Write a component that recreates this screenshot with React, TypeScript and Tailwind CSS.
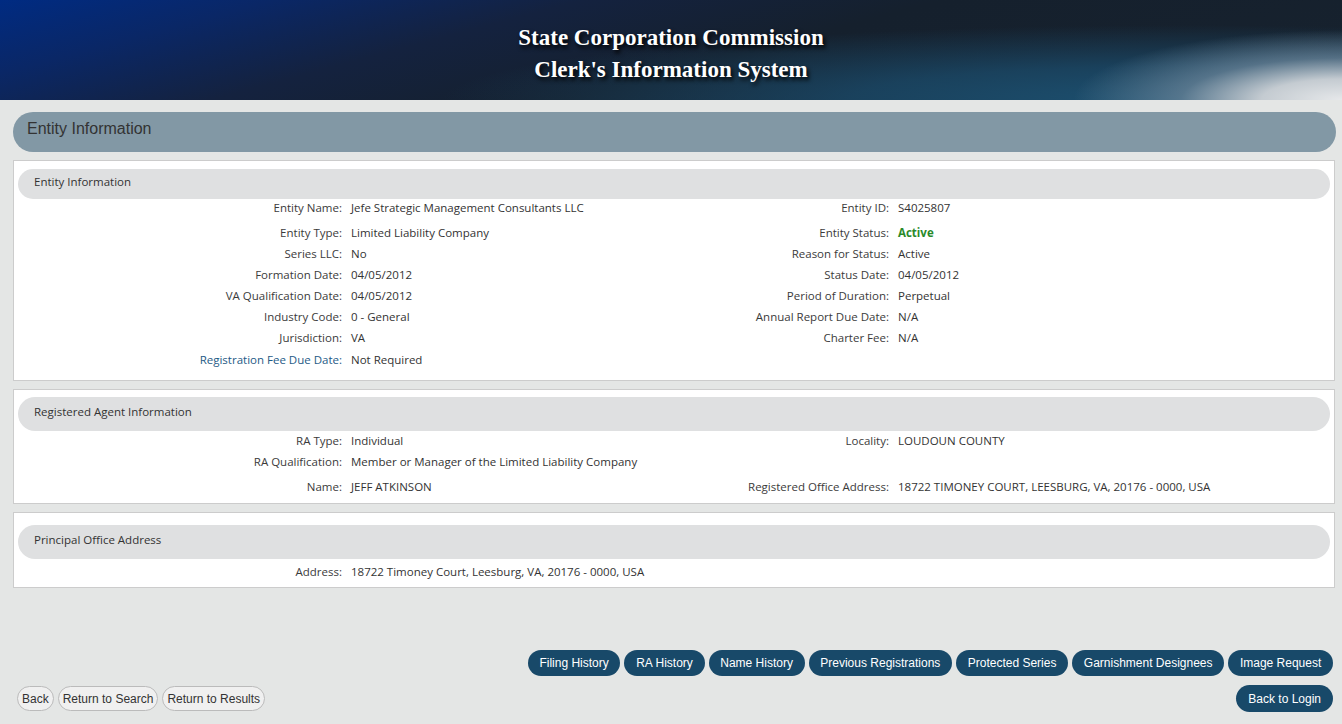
import React from "react";

type Cell = { label: string; value: React.ReactNode; labelClass?: string };
type Row = { left?: Cell; right?: Cell; extra?: string };

const ENTITY_ROWS: Row[] = [
  {
    extra: "-mt-[2px]",
    left: { label: "Entity Name:", value: "Jefe Strategic Management Consultants LLC" },
    right: { label: "Entity ID:", value: "S4025807" },
  },
  {
    extra: "mt-[4px]",
    left: { label: "Entity Type:", value: "Limited Liability Company" },
    right: { label: "Entity Status:", value: <span className="font-bold text-[#2a8a2a]">Active</span> },
  },
  { left: { label: "Series LLC:", value: "No" }, right: { label: "Reason for Status:", value: "Active" } },
  { left: { label: "Formation Date:", value: "04/05/2012" }, right: { label: "Status Date:", value: "04/05/2012" } },
  { left: { label: "VA Qualification Date:", value: "04/05/2012" }, right: { label: "Period of Duration:", value: "Perpetual" } },
  { left: { label: "Industry Code:", value: "0 - General" }, right: { label: "Annual Report Due Date:", value: "N/A" } },
  { left: { label: "Jurisdiction:", value: "VA" }, right: { label: "Charter Fee:", value: "N/A" } },
  {
    extra: "mt-[1px]",
    left: { label: "Registration Fee Due Date:", value: "Not Required", labelClass: "text-[#1e5a86]" },
  },
];

const RA_ROWS: Row[] = [
  { left: { label: "RA Type:", value: "Individual" }, right: { label: "Locality:", value: "LOUDOUN COUNTY" } },
  { left: { label: "RA Qualification:", value: "Member or Manager of the Limited Liability Company" } },
  {
    extra: "mt-[4px]",
    left: { label: "Name:", value: "JEFF ATKINSON" },
    right: { label: "Registered Office Address:", value: "18722 TIMONEY COURT, LEESBURG, VA, 20176 - 0000, USA" },
  },
];

const PRINCIPAL_ROWS: Row[] = [
  { left: { label: "Address:", value: "18722 Timoney Court, Leesburg, VA, 20176 - 0000, USA" } },
];

const ACTIONS = [
  "Filing History",
  "RA History",
  "Name History",
  "Previous Registrations",
  "Protected Series",
  "Garnishment Designees",
  "Image Request",
];

function DataRow({ row }: { row: Row }) {
  return (
    <div className={`grid grid-cols-[337px_319px_228px_1fr] h-[21px] items-center ${row.extra ?? ""}`}>
      <div className={`text-right pr-[9px] ${row.left?.labelClass ?? "text-[#3b3b3b]"}`}>{row.left?.label}</div>
      <div className="text-[#333]">{row.left?.value}</div>
      <div className={`text-right pr-[9px] ${row.right?.labelClass ?? "text-[#3b3b3b]"}`}>{row.right?.label}</div>
      <div className="text-[#333]">{row.right?.value}</div>
    </div>
  );
}

function Panel({
  title,
  rows,
  headClass,
  bodyClass,
}: {
  title: string;
  rows: Row[];
  headClass: string;
  bodyClass: string;
}) {
  return (
    <div className="bg-white border border-[#cccccc]">
      <div className={`mx-[4px] rounded-full bg-[#dfe0e1] flex items-center pl-[16px] text-[#333] ${headClass}`}>
        {title}
      </div>
      <div className={bodyClass}>
        {rows.map((r, i) => (
          <DataRow key={i} row={r} />
        ))}
      </div>
    </div>
  );
}

export default function App() {
  return (
    <div className="min-h-[724px] bg-[#e4e6e5] font-['Open_Sans','Noto_Sans',sans-serif] text-[11.5px]">
      {/* Banner */}
      <div className="h-[100px] flex flex-col items-center pt-[22px] bg-[radial-gradient(ellipse_20%_70%_at_100%_100%,#e6e8ea_0%,#c4cbd1_30%,rgba(110,135,155,0.7)_60%,rgba(27,74,106,0)_100%),radial-gradient(ellipse_55%_75%_at_88%_100%,rgba(28,80,112,1)_0%,rgba(27,76,108,0.75)_45%,rgba(27,76,108,0)_100%),linear-gradient(165deg,#002b82_0%,#0a2766_16%,#14223f_34%,#15202d_55%,#17222e_100%)]">
        <div className="font-['Liberation_Serif','Times_New_Roman',serif] font-bold text-white text-[23px] leading-[32px] text-center [text-shadow:2px_3px_4px_#000]">
          <div>State Corporation Commission</div>
          <div>Clerk's Information System</div>
        </div>
      </div>

      <div className="pl-[13px] pr-[6px] pt-[12px]">
        <div className="h-[40px] rounded-full bg-[#8298a5] flex items-center pl-[14px] pb-[7px] font-['Liberation_Sans',Arial,sans-serif] text-[16px] text-[#333]">
          Entity Information
        </div>

        <div className="mt-[8px] mr-[1px] flex flex-col gap-[8px]">
          <Panel title="Entity Information" rows={ENTITY_ROWS} headClass="mt-[8px] h-[30px] pb-[4px]" bodyClass="pb-[10px]" />
          <Panel title="Registered Agent Information" rows={RA_ROWS} headClass="mt-[7px] h-[34px] pb-[4px]" bodyClass="-mt-[1px] pb-[6px]" />
          <Panel title="Principal Office Address" rows={PRINCIPAL_ROWS} headClass="mt-[12px] h-[34px] pb-[4px]" bodyClass="pt-[2px] pb-[5px]" />
        </div>

        <div className="mt-[62px] flex justify-end gap-[4px] pr-[3px] font-['Liberation_Sans',Arial,sans-serif] text-[12px]">
          {ACTIONS.map((a) => (
            <button key={a} className="h-[26px] px-[11.7px] rounded-full bg-[#184969] text-white">
              {a}
            </button>
          ))}
        </div>

        <div className="mt-[9px] flex items-center justify-between pl-[4px] pr-[3px] font-['Liberation_Sans',Arial,sans-serif] text-[12px]">
          <div className="flex gap-[4px]">
            {["Back", "Return to Search", "Return to Results"].map((b) => (
              <button key={b} className="h-[25px] px-[4px] rounded-full bg-[#f0f0f0] border border-[#bbbbbb] text-[#333]">
                {b}
              </button>
            ))}
          </div>
          <button className="h-[27px] px-[12px] rounded-full bg-[#184969] text-white">Back to Login</button>
        </div>
      </div>
    </div>
  );
}
